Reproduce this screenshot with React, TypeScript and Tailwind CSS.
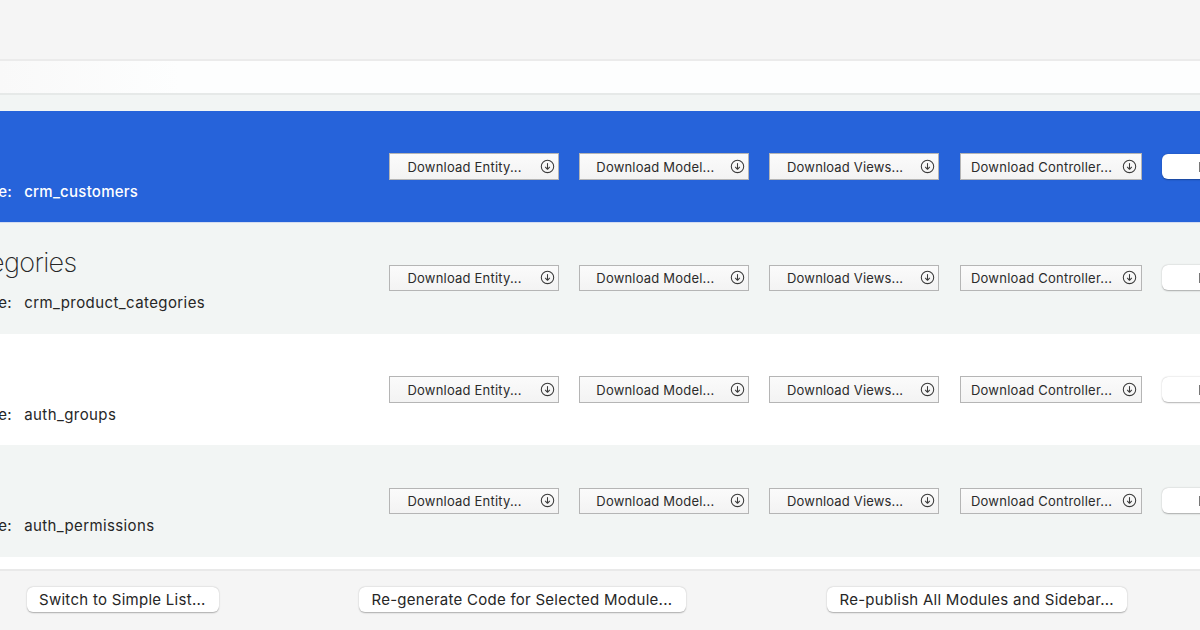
const downloads = [
  { label: "Download Entity...", box: "ml-[389px] w-[170px] pl-[17.5px]", text: "tracking-[0.2px]" },
  { label: "Download Model...", box: "ml-[20.3px] w-[170px] pl-[16px]", text: "tracking-[0.2px]" },
  { label: "Download Views...", box: "ml-[20.1px] w-[170px] pl-[16.7px]", text: "tracking-[0.16px]" },
  { label: "Download Controller...", box: "ml-[20.4px] w-[182px] pl-[10.2px]", text: "tracking-[0.23px]" },
];

const modules = [
  { title: "", table: "crm_customers", row: "h-[112px] bg-[#2663da] text-white border-[#d4dcf0]", label: "mt-[12px] font-medium tracking-[0.25px]", strip: "", button: "h-[27px]" },
  { title: "egories", table: "crm_product_categories", row: "h-[111px] bg-[#f2f5f4] text-[#262626] border-[#f2f5f4]", label: "mt-[11px] tracking-[0.41px]", strip: "-mt-px", button: "h-[26px]" },
  { title: "", table: "auth_groups", row: "h-[111px] bg-white text-[#262626] border-white", label: "mt-[12px] tracking-[0.42px]", strip: "", button: "h-[27px]" },
  { title: "", table: "auth_permissions", row: "h-[112px] bg-[#f2f5f4] text-[#262626] border-[#f2f5f4]", label: "mt-[12px] tracking-[0.38px]", strip: "", button: "h-[26px]" },
];

const actions = [
  { label: "Switch to Simple List...", box: "ml-[26.5px] w-[192px]", text: "tracking-[0.28px]" },
  { label: "Re-generate Code for Selected Module...", box: "ml-[140.5px] w-[327px]", text: "tracking-[0.26px]" },
  { label: "Re-publish All Modules and Sidebar...", box: "ml-[141px] w-[300.4px]", text: "tracking-[0.26px]" },
];

function DownloadIcon() {
  return (
    <svg className="ml-auto mr-[3.3px] size-[15px] shrink-0" viewBox="0 0 15 15" fill="none" stroke="#3a3a3a" strokeLinecap="round" strokeLinejoin="round">
      <circle cx="7.5" cy="7.4" r="6.2" strokeWidth="1.05" />
      <path d="M7.5 4.4v5.8M5.4 8.2l2.1 2.1L9.6 8.2" strokeWidth="1.05" />
    </svg>
  );
}

export default function App() {
  return (
    <div className="flex h-[630px] w-[1200px] flex-col overflow-hidden bg-white font-['Inter',sans-serif] text-[#262626]">
      <div className="h-[61px] shrink-0 border-b-2 border-[#ebebeb] bg-[#f5f5f5]" />
      <div className="h-[32px] shrink-0 bg-linear-to-r from-[#f9f9f9] to-[#fdfefe] to-[180px]" />
      <div className="h-[18px] shrink-0 border-t-2 border-[#e6e9e8] bg-[#f2f5f4]" />
      {modules.map((m) => (
        <div key={m.table} className={`grid shrink-0 border-b ${m.row}`}>
          <div className="col-start-1 row-start-1 flex flex-col whitespace-nowrap">
            <div className="ml-[-11px] mt-[22px] h-[36px] text-[27px] leading-[36px] font-extralight tracking-[-0.65px]">{m.title}</div>
            <div className={`flex text-[15px] leading-[22px] ${m.label}`}>
              <span className="ml-[-1.8px] w-[26px]">e:</span>
              <span>{m.table}</span>
            </div>
          </div>
          <div className={`col-start-1 row-start-1 flex h-[111px] w-[1200px] items-center overflow-hidden ${m.strip}`}>
            {downloads.map((d) => (
              <button key={d.label} className={`flex shrink-0 items-center border border-[#b5b5b5] bg-linear-to-b from-[#fbfbfb] to-[#f3f3f3] text-[13px] whitespace-nowrap text-[#2b2b2b] ${m.button} ${d.box}`}>
                <span className={`pt-[2px] ${d.text}`}>{d.label}</span>
                <DownloadIcon />
              </button>
            ))}
            <button className="ml-[20.3px] flex h-[25px] w-[120px] shrink-0 items-center rounded-[6px] bg-white pl-[36.5px] shadow-[0_0.5px_1.5px_rgba(0,0,0,0.3)]">
              <span className="h-[10px] w-px bg-[#777]" />
            </button>
          </div>
        </div>
      ))}
      <div className="h-[12px] shrink-0" />
      <div className="flex h-[61px] shrink-0 border-t-2 border-[#e9e9e9] bg-[#f5f5f5] pt-[16px]">
        {actions.map((a) => (
          <button key={a.label} className={`flex h-[25px] shrink-0 items-center rounded-[6px] bg-white pl-[12.5px] text-[15px] whitespace-nowrap shadow-[0_0.5px_1.5px_rgba(0,0,0,0.3)] ${a.box}`}>
            <span className={`pt-px ${a.text}`}>{a.label}</span>
          </button>
        ))}
      </div>
    </div>
  );
}
